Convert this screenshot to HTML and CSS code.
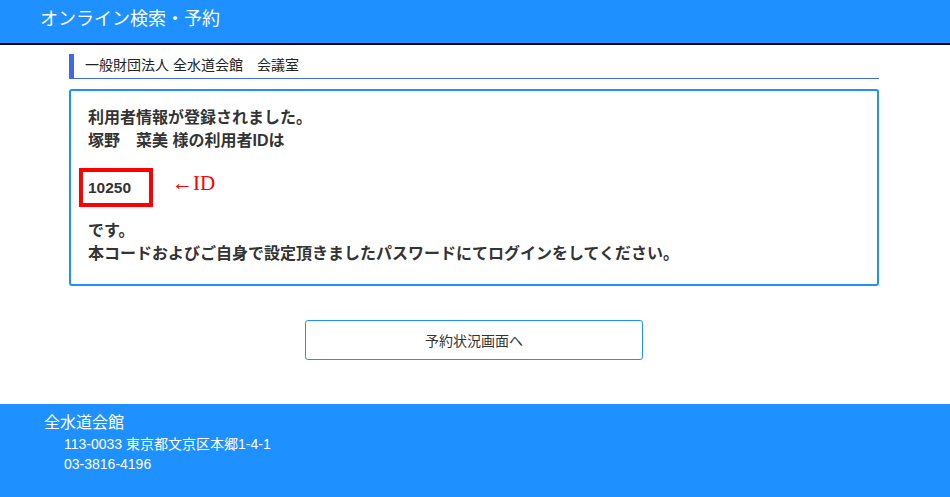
FILE: index.html
```html
<!DOCTYPE html>
<html lang="ja">
<head>
    <meta charset="UTF-8">
    <meta name="viewport" content="width=device-width, initial-scale=1.0">
    <title>オンライン検索・予約</title>
    <link rel="stylesheet" href="styles.css">
</head>
<body>
    <header class="header">
        <div class="header-title">オンライン検索・予約</div>
    </header>

    <main class="main">
        <h2 class="section-title">一般財団法人 全水道会館　会議室</h2>

        <div class="result-box">
            <p class="message">利用者情報が登録されました。<br>塚野　菜美 様の利用者IDは</p>
            <div class="id-row">
                <span class="user-id">10250</span>
                <span class="id-note">←ID</span>
            </div>
            <p class="message">です。<br>本コードおよびご自身で設定頂きましたパスワードにてログインをしてください。</p>
        </div>

        <div class="actions">
            <button class="btn" type="button">予約状況画面へ</button>
        </div>
    </main>

    <footer class="footer">
        <div class="footer-name">全水道会館</div>
        <div class="footer-line">113-0033 東京都文京区本郷1-4-1</div>
        <div class="footer-line">03-3816-4196</div>
    </footer>
</body>
</html>
```

FILE: styles.css
```css
body {
    margin: 0;
    font-family: "Liberation Sans", "Noto Sans CJK JP", sans-serif;
    color: #333;
    background: #fff;
}

.header {
    height: 29px;
    padding: 7px 40px;
    background: #1e90ff;
    border-bottom: 2px solid #000;
}

.header-title {
    color: #fff;
    font-size: 18px;
    line-height: 24px;
}

.main {
    width: 810px;
    margin: 0 auto;
    padding: 9px 2px 0 0;
}

.section-title {
    margin: 0;
    padding: 0 0 2px 11px;
    border-left: 5px solid #4169e1;
    border-bottom: 1px solid #4169e1;
    font-size: 14px;
    font-weight: normal;
    line-height: 22px;
    color: #222;
}

.result-box {
    margin-top: 10px;
    padding: 15px 8px 19px;
    border: 2px solid #1e90ff;
    border-radius: 3px;
}

.message {
    margin: 0;
    padding-left: 9px;
    font-size: 16px;
    font-weight: bold;
    line-height: 23px;
}

.id-row {
    display: flex;
    align-items: flex-start;
    margin: 16px 0 12px;
}

.user-id {
    display: inline-block;
    width: 74px;
    box-sizing: border-box;
    padding: 0 5px;
    border: 4px solid #ff0000;
    font-size: 15.5px;
    font-weight: bold;
    line-height: 31px;
}

.id-note {
    margin: 3px 0 0 19px;
    color: #ff0000;
    font-family: "Liberation Serif", "Noto Sans CJK JP", serif;
    font-size: 21px;
    line-height: 24px;
}

.actions {
    display: flex;
    justify-content: center;
    margin-top: 34px;
}

.btn {
    width: 338px;
    height: 40px;
    background: #fff;
    border: 1px solid #1e90ff;
    border-radius: 3px;
    color: #333;
    font-family: inherit;
    font-size: 14px;
    cursor: pointer;
}

.btn:hover {
    background: #f0f7ff;
}

.footer {
    margin-top: 44px;
    padding: 8px 0 23px;
    background: #1e90ff;
    color: #fff;
}

.footer-name {
    padding-left: 44px;
    font-size: 16px;
    line-height: 22px;
}

.footer-line {
    padding-left: 64px;
    font-size: 14px;
    line-height: 20px;
}
```
